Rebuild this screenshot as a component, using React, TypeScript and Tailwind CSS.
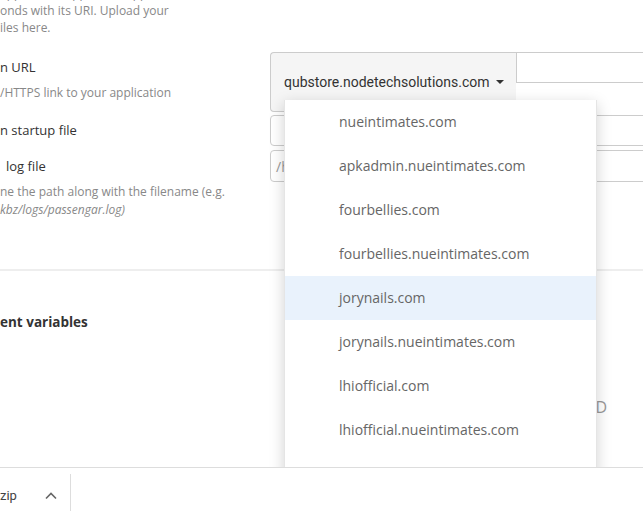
import React from 'react';

const domains = [
  'nueintimates.com',
  'apkadmin.nueintimates.com',
  'fourbellies.com',
  'fourbellies.nueintimates.com',
  'jorynails.com',
  'jorynails.nueintimates.com',
  'lhiofficial.com',
  'lhiofficial.nueintimates.com',
];

function Caret() {
  return (
    <svg width="8" height="4" viewBox="0 0 8 4" className="ml-[6px] shrink-0">
      <path d="M0 0h8L4 4z" fill="#333" />
    </svg>
  );
}

export default function App() {
  const active = 'jorynails.com';

  return (
    <div className="w-[643px] h-[511px] overflow-hidden bg-white flex flex-col font-['Open_Sans',sans-serif]">
      <div className="relative h-[467px] shrink-0 overflow-hidden">
        {/* form rows */}
        <div className="flex h-[269px]">
          <div className="w-[270px] shrink-0">
            <p className="-mt-[15px] text-[12px] leading-[17px] text-[#888] whitespace-nowrap">
              application upp to the app
              <br />
              onds with its URI. Upload your
              <br />
              iles here.
            </p>
            <div className="mt-[22px] text-[13px] leading-[18px] text-[#333]">n URL</div>
            <div className="mt-[8px] text-[12px] leading-[17px] text-[#888]">/HTTPS link to your application</div>
            <div className="mt-[20px] text-[13px] leading-[18px] text-[#333]">n startup file</div>
            <div className="mt-[18px] ml-[6px] text-[13px] leading-[18px] text-[#333]">log file</div>
            <p className="mt-[8px] text-[12px] leading-[18px] text-[#888] whitespace-nowrap">
              ne the path along with the filename (e.g.
              <br />
              <i>kbz/logs/passengar.log)</i>
            </p>
          </div>

          <div className="w-[400px] shrink-0 pt-[52px]">
            <div className="flex items-start">
              <button className="w-[246px] h-[60px] shrink-0 flex items-center pl-[13px] bg-[#f5f5f5] border border-r-0 border-[#ccc] rounded-l-[4px] font-['Roboto',sans-serif] text-[14px] text-[#333]">
                qubstore.nodetechsolutions.com
                <Caret />
              </button>
              <div className="flex-1 h-[31px] border border-[#ccc] bg-white" />
            </div>
            <div className="mt-[3px] h-[31px] border border-[#ccc] rounded-l-[4px] bg-white" />
            <div className="mt-[4px] h-[32px] border border-[#ccc] rounded-l-[4px] bg-white flex items-center pl-[5px] text-[14px] text-[#999]">
              /home
            </div>
          </div>
        </div>

        <div className="h-[2px] bg-[#eee]" />

        <div className="mt-[41px] text-[13.5px] leading-[20px] font-bold text-[#333]">ent variables</div>
        <div className="mt-[64px] flex justify-end pr-[36px] text-[16px] leading-[22px] text-[#999]">ADD</div>

        {/* domain dropdown menu */}
        <div className="absolute left-[284px] top-[100px] w-[313px] h-[400px] bg-white border border-t-0 border-black/10 shadow-[0_4px_14px_rgba(0,0,0,0.18)]">
          {domains.map((d) => (
            <div
              key={d}
              className={`h-[44px] flex items-center pl-[54px] pb-[2px] text-[14px] text-[#666] ${d === active ? 'bg-[#e9f2fc]' : ''}`}
            >
              {d}
            </div>
          ))}
        </div>
      </div>

      {/* downloads shelf */}
      <div className="flex-1 border-t border-[#ddd] bg-white flex items-stretch pt-[6px] font-['Roboto',sans-serif]">
        <div className="w-[71px] shrink-0 border-r border-[#ddd] flex items-start pt-[14px]">
          <span className="text-[13px] leading-[16px] text-[#444]">zip</span>
          <svg width="12" height="8" viewBox="0 0 12 8" className="ml-[28px] mt-[4px]">
            <path d="M1 6.5 6 1.5l5 5" fill="none" stroke="#666" strokeWidth="1.6" />
          </svg>
        </div>
      </div>
    </div>
  );
}
